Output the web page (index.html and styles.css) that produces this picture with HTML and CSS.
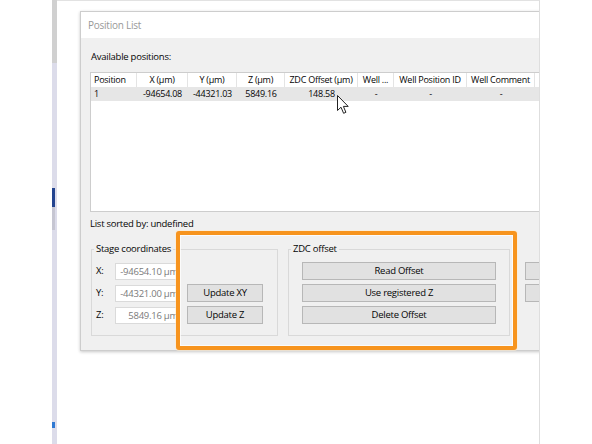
FILE: index.html
```html
<!DOCTYPE html>
<html>
<head>
<meta charset="utf-8">
<title>Position List</title>
<link rel="stylesheet" href="styles.css">
</head>
<body>
<div class="gutter"></div>
<div class="rail">
  <div class="rail-top"></div>
  <div class="rail-thumb"></div>
  <div class="rail-track"></div>
  <div class="rail-mark"></div>
</div>
<div class="screen">
  <div class="dialog">
    <div class="titlebar">Position List</div>
    <div class="dlg-body">
      <div class="caption">Available positions:</div>
      <div class="list">
        <div class="list-row list-head">
          <span class="c-left">Position</span>
          <span>X (µm)</span>
          <span>Y (µm)</span>
          <span>Z (µm)</span>
          <span>ZDC Offset (µm)</span>
          <span>Well ...</span>
          <span>Well Position ID</span>
          <span>Well Comment</span>
          <span></span>
        </div>
        <div class="list-row list-sel">
          <span class="c-left">1</span>
          <span>-94654.08</span>
          <span>-44321.03</span>
          <span>5849.16</span>
          <span>148.58</span>
          <span>-</span>
          <span>-</span>
          <span>-</span>
          <span></span>
        </div>
      </div>
      <div class="caption sorted">List sorted by: undefined</div>
      <div class="groups">
        <fieldset class="group stage">
          <legend>Stage coordinates</legend>
          <div class="stage-grid">
            <span class="lbl">X:</span>
            <span class="field">-94654.10 µm</span>
            <span></span>
            <span class="lbl">Y:</span>
            <span class="field">-44321.00 µm</span>
            <button class="btn">Update XY</button>
            <span class="lbl">Z:</span>
            <span class="field">5849.16 µm</span>
            <button class="btn">Update Z</button>
          </div>
        </fieldset>
        <fieldset class="group zdc">
          <legend>ZDC offset</legend>
          <div class="zdc-col">
            <button class="btn">Read Offset</button>
            <button class="btn">Use registered Z</button>
            <button class="btn">Delete Offset</button>
          </div>
        </fieldset>
        <div class="extra-col">
          <button class="btn extra"></button>
          <button class="btn extra"></button>
        </div>
      </div>
    </div>
    <div class="highlight"></div>
    <svg class="cursor" width="13" height="20" viewBox="0 0 13 20">
      <path d="M0.5 0.5 L0.5 15.5 L4 12.2 L6.6 18.3 L8.9 17.3 L6.4 11.4 L11.2 11.4 Z" fill="#fff" stroke="#222" stroke-width="1" stroke-linejoin="round"/>
    </svg>
  </div>
</div>
</body>
</html>
```
FILE: styles.css
```css
html, body {
  margin: 0;
  padding: 0;
}
body {
  width: 592px;
  height: 444px;
  overflow: hidden;
  display: flex;
  background: #ffffff;
  font-family: "Open Sans", "Noto Sans", sans-serif;
  font-size: 9.5px;
  letter-spacing: -0.25px;
  color: #050505;
}
.gutter {
  width: 52px;
  flex: none;
}
.rail {
  width: 5px;
  flex: none;
  height: 444px;
  background: #dcdcea;
  display: flex;
  flex-direction: column;
}
.rail-top {
  height: 63px;
  background: #d0d0d0;
}
.rail-thumb {
  margin-top: 125px;
  height: 19px;
  width: 3px;
  background: #23448f;
}
.rail-track {
  height: 23px;
  width: 3px;
  background: #c6c6d2;
}
.rail-mark {
  margin-top: 192px;
  height: 6px;
  width: 3px;
  background: #2f79d3;
}
.screen {
  width: 483px;
  flex: none;
  height: 444px;
  box-sizing: border-box;
  border-top: 1px solid #e2e2e2;
  border-right: 1px solid #dedede;
  padding: 10px 0 0 23px;
  overflow: hidden;
}
.dialog {
  position: relative;
  width: 500px;
  height: 340px;
  box-sizing: border-box;
  border: 1px solid #cdcdcd;
  background: #f0f0f0;
  box-shadow: 0 1px 3px rgba(0, 0, 0, 0.22);
}
.titlebar {
  height: 26px;
  line-height: 26px;
  background: #ffffff;
  padding-left: 7px;
  font-size: 10px;
  color: #999999;
}
.dlg-body {
  padding: 12px 0 0 9px;
}
.caption {
  line-height: 14px;
  padding-left: 1px;
}
.list {
  margin-top: 8px;
  width: 470px;
  height: 140px;
  box-sizing: border-box;
  border: 1px solid #cdcdcd;
  background: #ffffff;
  font-size: 9px;
}
.list-row {
  display: grid;
  grid-template-columns: 46px 51px 49px 48px 73px 36px 73px 68px 1fr;
  height: 14px;
  line-height: 14px;
}
.list-row span {
  text-align: center;
  white-space: nowrap;
  overflow: hidden;
}
.list-row .c-left {
  text-align: left;
  padding-left: 3px;
}
.list-head span {
  box-sizing: border-box;
  border-right: 1px solid #e4e4e4;
}
.list-head span:last-child {
  border-right: none;
}
.list-sel {
  background: #e6e6e6;
}
.sorted {
  margin-top: 5px;
  padding-left: 0;
}
.groups {
  margin-top: 11px;
  display: flex;
  align-items: flex-start;
}
.groups > * {
  flex: none;
}
.group {
  margin: 0;
  border: 1px solid #d9d9d9;
  min-inline-size: 0;
}
.group legend {
  padding: 0 2px;
  line-height: 14px;
}
.stage {
  margin-left: 1px;
  padding: 6px 14px 11px 2px;
}
.stage-grid {
  margin-left: 2px;
  display: grid;
  grid-template-columns: 19px 72px 76px;
  grid-auto-rows: 18px;
  row-gap: 4px;
  align-items: center;
}
.lbl {
  line-height: 18px;
}
.field {
  width: 65px;
  height: 17px;
  line-height: 15px;
  box-sizing: border-box;
  border: 1px solid #dadada;
  background: #ffffff;
  color: #7a7a7a;
  text-align: right;
  padding-right: 1px;
  white-space: nowrap;
  overflow: hidden;
}
.btn {
  height: 18px;
  margin: 0;
  padding: 0;
  box-sizing: border-box;
  border: 1px solid #b7b7b7;
  border-radius: 0;
  background: #e1e1e1;
  font-family: inherit;
  font-size: 9.5px;
  letter-spacing: -0.25px;
  line-height: 16px;
  color: #050505;
}
.stage-grid .btn {
  width: 76px;
}
.zdc {
  margin-left: 10px;
  padding: 6px 13px 11px 2px;
}
.zdc-col {
  padding-left: 11px;
  display: flex;
  flex-direction: column;
  gap: 4px;
}
.zdc-col .btn {
  width: 194px;
}
.extra-col {
  margin-left: 15px;
  margin-top: 20px;
  display: flex;
  flex-direction: column;
  gap: 4px;
}
.btn.extra {
  width: 60px;
}
.highlight {
  position: absolute;
  left: 95px;
  top: 219px;
  width: 341px;
  height: 119px;
  box-sizing: border-box;
  border: 4px solid #f7941e;
  border-radius: 3px;
  box-shadow: inset 0 0 0 1px rgba(255, 255, 255, 0.75), 0 0 0 1px rgba(255, 236, 210, 0.6);
}
.cursor {
  position: absolute;
  left: 256px;
  top: 83px;
}
```
